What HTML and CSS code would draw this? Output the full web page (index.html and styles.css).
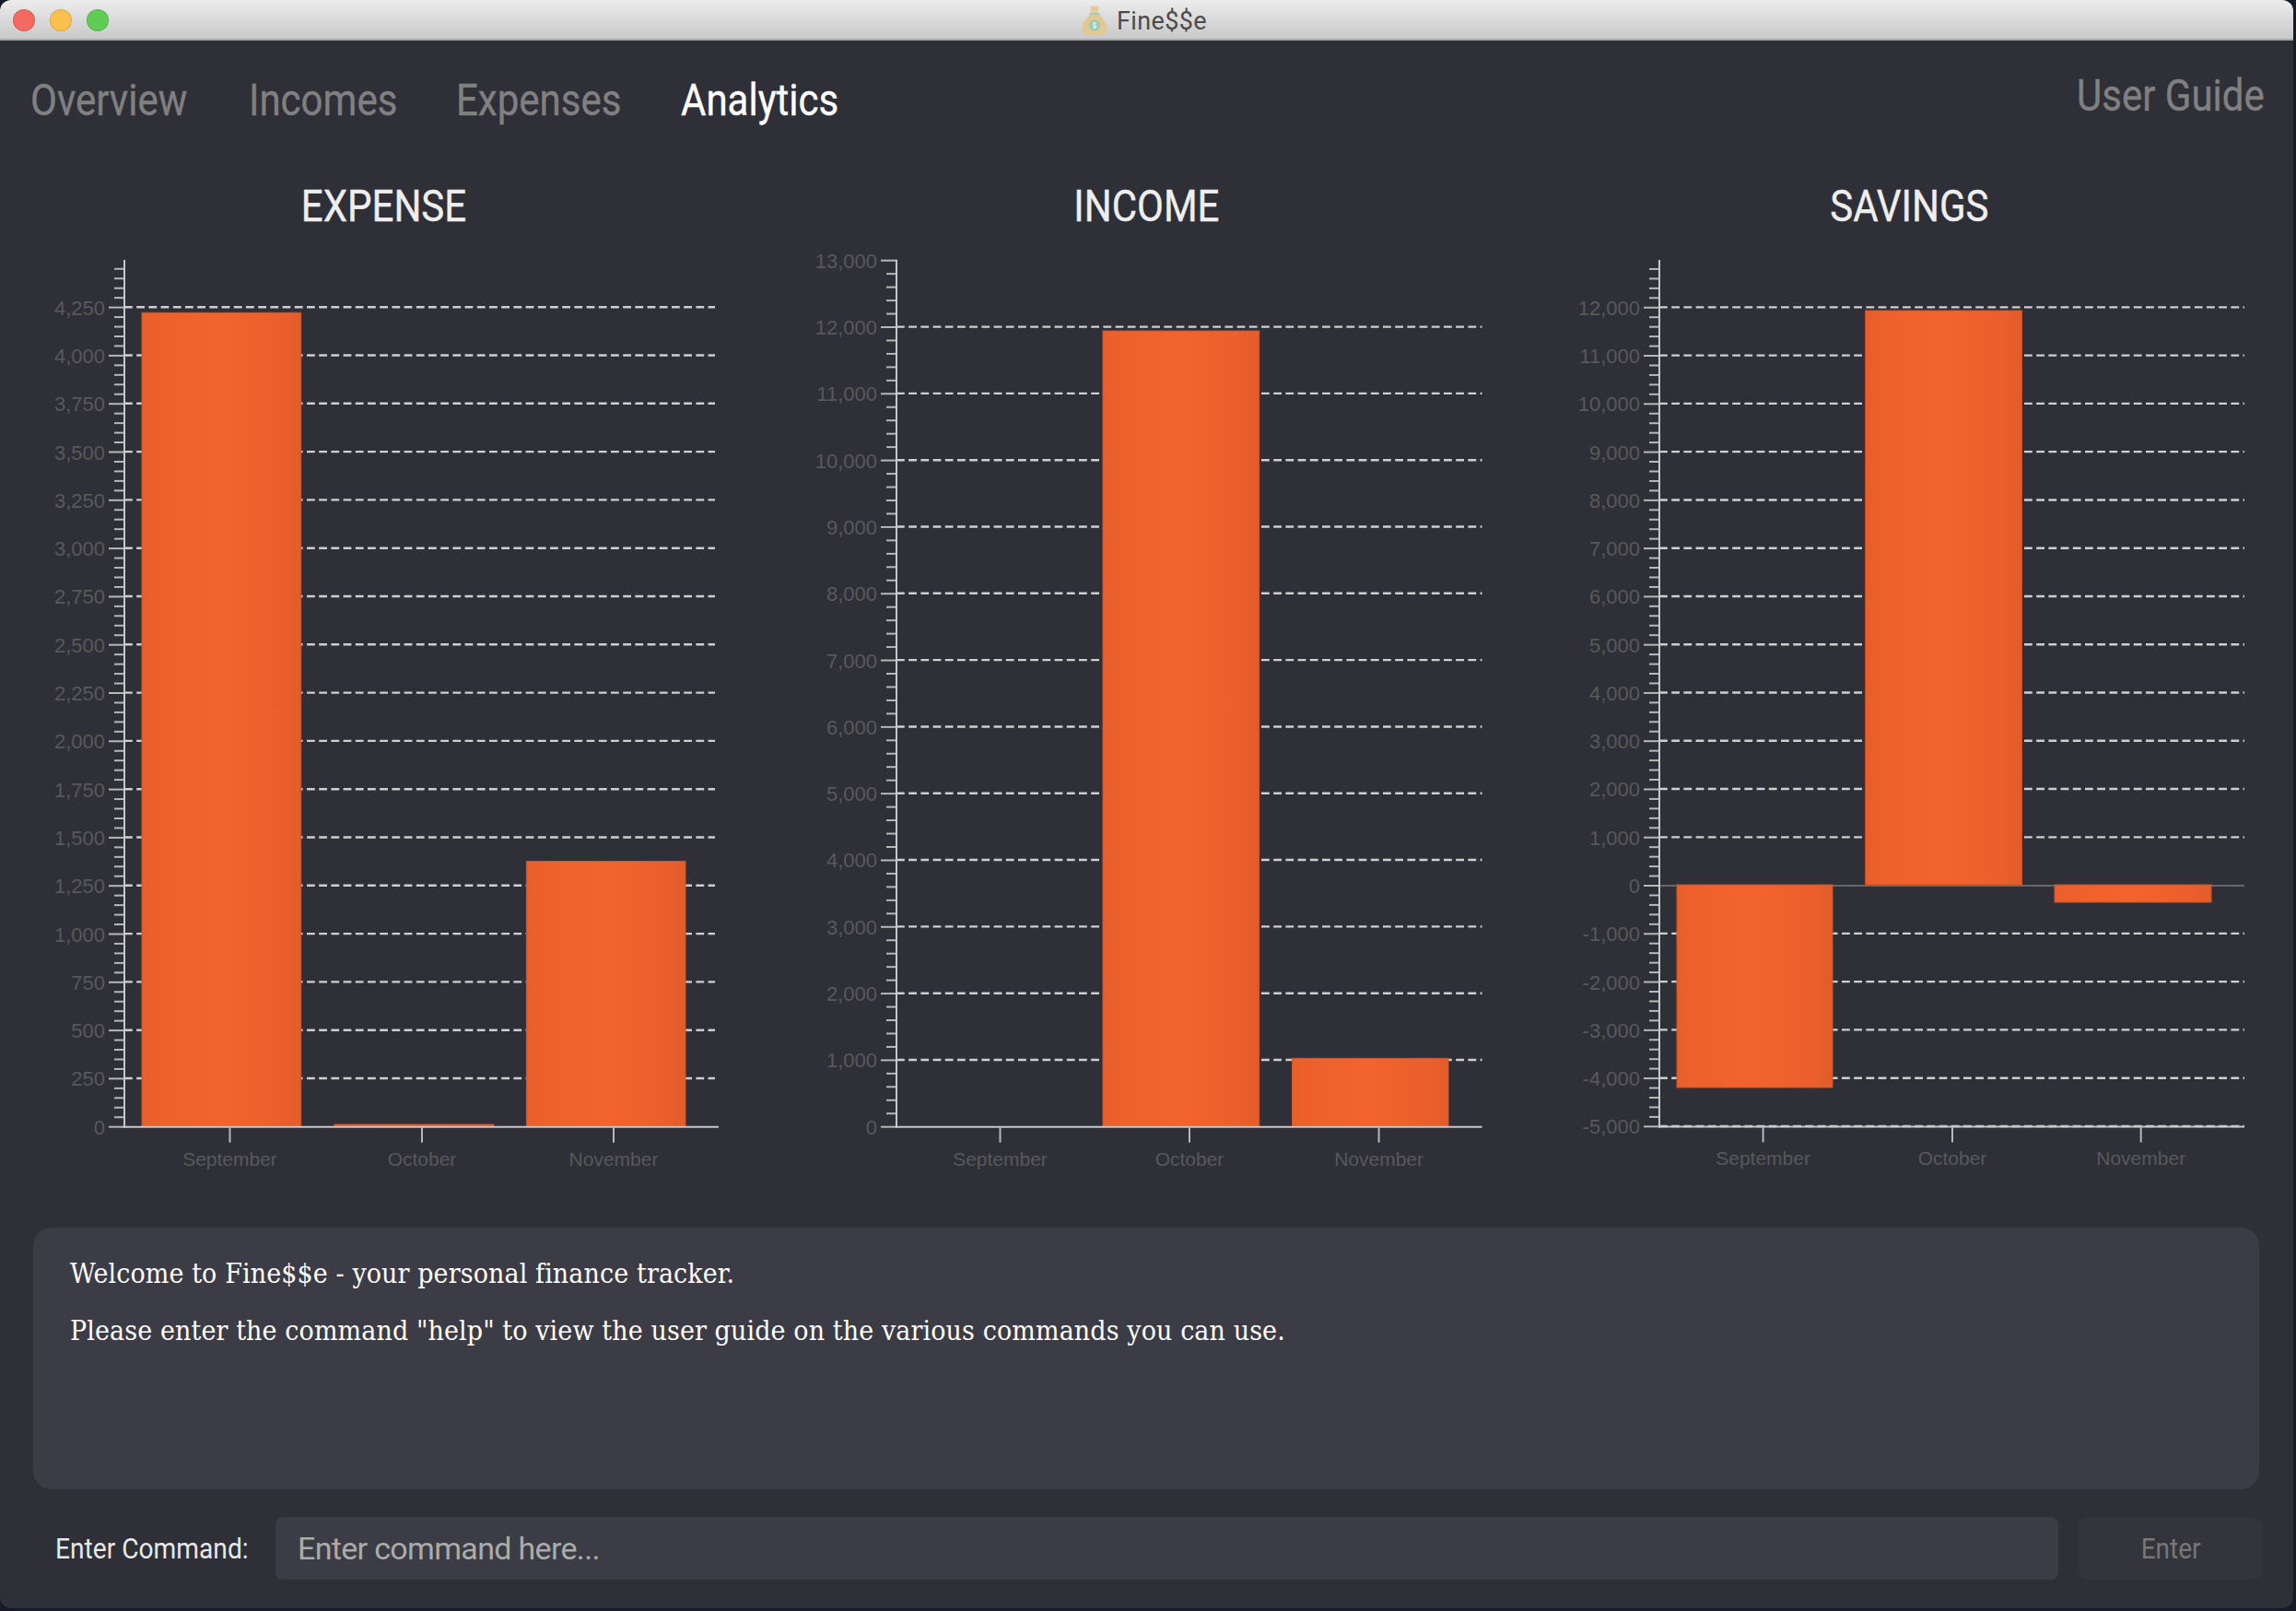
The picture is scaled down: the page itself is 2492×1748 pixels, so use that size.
FILE: index.html
```html
<!DOCTYPE html>
<html lang="en">
<head>
<meta charset="utf-8">
<title>Fine$$e</title>
<link rel="stylesheet" href="styles.css">
</head>
<body>
<svg class="defs" width="0" height="0" aria-hidden="true">
  <defs>
    <linearGradient id="barFill" x1="0" y1="0" x2="1" y2="0">
      <stop offset="0" stop-color="#e85f2c"/>
      <stop offset="0.15" stop-color="#ef612c"/>
      <stop offset="0.5" stop-color="#f3632d"/>
      <stop offset="0.85" stop-color="#ec5f2c"/>
      <stop offset="1" stop-color="#e25c2b"/>
    </linearGradient>
  </defs>
</svg>
<div class="window">
  <header class="titlebar">
    <div class="lights">
      <span class="light red"></span>
      <span class="light amber"></span>
      <span class="light green"></span>
    </div>
    <div class="wintitle">
      <svg class="bag" viewBox="0 0 28 32">
        <path d="M9 1.500c3-1.300 7-1.300 10 0l-1.500 6.500h-7z" fill="#e6cc98"/>
        <path d="M10 9h8c4 4 9.500 9 9.500 16 0 5-3 6.500-6 6.500h-15c-3 0-6-1.500-6-6.500 0-7 5.500-12 9.500-16z" fill="#e3c894"/>
        <rect x="8.500" y="8" width="11" height="2.200" rx="1" fill="#9fcdb6"/>
        <circle cx="14" cy="21.500" r="6" fill="#93cdb8"/>
        <path d="M16 19.300c-1-.8-3.800-.9-3.900.8 0 1.900 3.900 1 3.900 3 0 1.700-3 1.600-4.200.6M14 17.800v7.400" fill="none" stroke="#f2f2e6" stroke-width="1"/>
      </svg>
      <span class="wintext">Fine$$e</span>
    </div>
  </header>

  <nav class="tabs">
    <div class="tablist">
      <span class="tab tab-overview">Overview</span>
      <span class="tab tab-incomes">Incomes</span>
      <span class="tab tab-expenses">Expenses</span>
      <span class="tab tab-active">Analytics</span>
    </div>
    <span class="tab tab-guide">User Guide</span>
  </nav>

  <main class="charts">
    <section class="chart">
      <h2 class="chart-title"><span class="squeeze">EXPENSE</span></h2>
      <svg class="plot" id="plot-expense" viewBox="0 270 828 1028"></svg>
    </section>
    <section class="chart">
      <h2 class="chart-title"><span class="squeeze">INCOME</span></h2>
      <svg class="plot" id="plot-income" viewBox="0 270 828 1028"></svg>
    </section>
    <section class="chart">
      <h2 class="chart-title"><span class="squeeze">SAVINGS</span></h2>
      <svg class="plot" id="plot-savings" viewBox="0 270 828 1028"></svg>
    </section>
  </main>

  <section class="result">
    <p class="result-line">Welcome to Fine$$e - your personal finance tracker.</p>
    <p class="result-line">Please enter the command "help" to view the user guide on the various commands you can use.</p>
  </section>

  <footer class="command">
    <label class="command-label"><span class="squeeze">Enter Command:</span></label>
    <div class="command-input"><span>Enter command here...</span></div>
    <div class="command-button"><span class="squeeze">Enter</span></div>
  </footer>
</div>
<script src="chart.js"></script>
</body>
</html>
```

FILE: styles.css
```css
html, body {
  margin: 0;
  padding: 0;
  background: #151b29;
}
body {
  width: 2492px;
  height: 1748px;
  overflow: hidden;
  font-family: "Roboto", "Liberation Sans", sans-serif;
}
.defs { position: absolute; }

.window {
  width: 2489px;
  height: 1745px;
  background: #2e2f37;
  border-radius: 12px;
  overflow: hidden;
  display: flex;
  flex-direction: column;
}

.titlebar {
  height: 42px;
  flex: none;
  border-bottom: 2px solid #a9a9a9;
  background: linear-gradient(#ececec, #c9c9c9);
  display: flex;
  align-items: center;
  justify-content: center;
  position: relative;
}
.lights {
  position: absolute;
  left: 14px;
  top: 10px;
  display: flex;
  gap: 16px;
}
.light { width: 24px; height: 24px; border-radius: 50%; box-sizing: border-box; border: 1px solid rgba(0,0,0,.12); }
.red { background: #f46a60; }
.amber { background: #fcc04c; }
.green { background: #5fcc53; }
.wintitle {
  display: flex;
  align-items: center;
  gap: 10px;
  margin-right: 5px;
  padding-top: 2px;
}
.bag { width: 28px; height: 32px; }
.wintext {
  font-family: "Roboto", sans-serif;
  font-size: 27px;
  color: #4c4c4c;
  letter-spacing: 0.4px;
  line-height: 32px;
  padding-top: 2px;
}

.tabs {
  height: 128px;
  flex: none;
  display: flex;
  justify-content: space-between;
  padding: 0 30px 0 33px;
}
.tablist { display: flex; gap: 67px; padding-top: 36px; }
.tab {
  display: inline-block;
  font-size: 48px;
  line-height: 58px;
  color: #808080;
  -webkit-text-stroke: 0.4px currentColor;
  transform: scaleX(.875);
  transform-origin: left center;
  white-space: nowrap;
}
.tab-overview { width: 170px; }
.tab-incomes { width: 158px; }
.tab-expenses { width: 177px; }
.tab-active { color: #ffffff; width: 172px; }
.tab-guide { margin-top: 31px; margin-left: -2px; width: 205px; height: 58px; }

.charts {
  flex: none;
  height: 1160px;
  display: grid;
  grid-template-columns: repeat(3, 828px);
  margin-left: 2px;
}
.chart { display: flex; flex-direction: column; align-items: center; }
.chart-title {
  margin: 23px 0 17px;
  height: 58px;
  font-size: 48px;
  line-height: 58px;
  font-weight: 400;
  color: #eeeeee;
  -webkit-text-stroke: 0.4px currentColor;
}
.squeeze {
  display: inline-block;
  transform: scaleX(.875);
  white-space: nowrap;
}
.plot { display: block; width: 828px; height: 1028px; overflow: visible; flex: none; }

.axis { stroke: #c8c8c8; stroke-width: 2; fill: none; }
.tick { stroke: #b8b8b8; stroke-width: 2; fill: none; }
.grid { stroke: #cfcfcf; stroke-width: 2.400; stroke-dasharray: 8.800 4.400; fill: none; }
.zero { stroke: #666666; stroke-width: 2; fill: none; }
.bar { fill: url(#barFill); stroke: #cf5529; stroke-width: 1; }
.ylabel, .xlabel {
  font-family: "Liberation Sans", sans-serif;
  fill: #595959;
}
.ylabel { font-size: 22px; text-anchor: end; }
.xlabel { font-size: 21px; text-anchor: middle; }

.result {
  flex: none;
  box-sizing: border-box;
  width: 2416px;
  height: 284px;
  margin-left: 36px;
  padding: 29px 40px;
  background: #3b3c45;
  border-radius: 20px;
}
.result-line {
  margin: 0 0 20px;
  font-family: "DejaVu Serif Condensed", "DejaVu Serif", serif;
  font-size: 30px;
  line-height: 42px;
  letter-spacing: 0.1px;
  color: #ffffff;
}

.command {
  flex: none;
  margin-top: 30px;
  height: 68px;
  display: flex;
  align-items: center;
  padding-left: 60px;
}
.command-label {
  width: 239px;
  flex: none;
  font-size: 32px;
  color: #e8e8e8;
}
.command-label .squeeze { transform: scaleX(.88); transform-origin: left center; }
.command-input {
  width: 1935px;
  height: 68px;
  flex: none;
  box-sizing: border-box;
  background: #3b3c45;
  border-radius: 8px;
  padding-left: 24px;
  font-size: 34px;
  line-height: 68px;
  color: #ababab;
  letter-spacing: -0.670px;
}
.command-button {
  width: 200px;
  height: 68px;
  flex: none;
  margin-left: 22px;
  background: #33343c;
  border-radius: 12px;
  text-align: center;
  font-size: 32px;
  line-height: 68px;
  color: #777777;
}
```

FILE: chart.js
```js
var OFF = [2, 830, 1658];
var NS = "http://www.w3.org/2000/svg";

var charts = [
  { id: "plot-expense", off: OFF[0], axisX: 135, endX: 780, gridEnd: 776, zeroY: 1222.7, pxPerUnit: 52.3 / 250,
    min: 0, max: 4500, major: 250, minor: 50, bottom: 1222.7, topTick: false,
    cats: [["September", 249.5], ["October", 458], ["November", 666]],
    bars: [[154, 326.7, 339.3, 1222], [362.8, 535.7, 1220, 1222], [571.4, 744, 934.5, 1222]] },
  { id: "plot-income", off: OFF[1], axisX: 973, endX: 1608.5, gridEnd: 1608.5, zeroY: 1222.7, pxPerUnit: 72.31 / 1000,
    min: 0, max: 13000, major: 1000, minor: 200, bottom: 1222.7, topTick: true,
    cats: [["September", 1085.5], ["October", 1291], ["November", 1496.6]],
    bars: [[1197, 1366.7, 359, 1222], [1402.5, 1572, 1148.3, 1222]] },
  { id: "plot-savings", off: OFF[2], axisX: 1801, endX: 2436, gridEnd: 2436, zeroY: 961, pxPerUnit: 52.27 / 1000,
    min: -5000, max: 13000, major: 1000, minor: 200, bottom: 1222.4, zeroLine: true, topTick: false,
    cats: [["September", 1913.6], ["October", 2119], ["November", 2323.7]],
    bars: [[1820, 1989, 960, 1180], [2024.7, 2194.4, 337, 960], [2230, 2400, 960, 979]] }
];

function el(parent, name, attrs, text) {
  var n = document.createElementNS(NS, name);
  for (var k in attrs) n.setAttribute(k, attrs[k]);
  if (text) n.textContent = text;
  parent.appendChild(n);
  return n;
}

function fmt(v) {
  return v.toString().replace(/\B(?=(\d{3})+$)/g, ",");
}

charts.forEach(function (c) {
  var svg = document.getElementById(c.id);
  var o = c.off;
  var Y = function (v) { return c.zeroY - v * c.pxPerUnit; };
  var ax = c.axisX - o, end = c.endX - o, gend = c.gridEnd - o;
  var topY = c.topTick ? Y(c.max) - 1 : 282;

  for (var v = c.min; v <= c.max; v += c.minor) {
    var y = Y(v);
    if (v === c.max && !c.topTick) continue;
    if (v % c.major === 0) {
      if (v !== 0 && v !== c.max) el(svg, "line", { "class": "grid", x1: ax, x2: gend, y1: y - 0.4, y2: y - 0.4 });
      el(svg, "line", { "class": "tick", x1: ax - 17, x2: ax, y1: y, y2: y });
      el(svg, "text", { "class": "ylabel", x: ax - 21, y: y + 8 }, fmt(v));
    } else {
      el(svg, "line", { "class": "tick", x1: ax - 11, x2: ax, y1: y, y2: y });
    }
  }
  if (c.zeroLine) el(svg, "line", { "class": "zero", x1: ax, x2: end, y1: c.zeroY, y2: c.zeroY });

  c.bars.forEach(function (b) {
    el(svg, "rect", { "class": "bar", x: b[0] - o, y: b[2], width: b[1] - b[0], height: b[3] - b[2] });
  });

  el(svg, "line", { "class": "axis", x1: ax, x2: ax, y1: topY, y2: c.bottom + 1 });
  el(svg, "line", { "class": "axis", x1: ax - 1, x2: end, y1: c.bottom, y2: c.bottom });

  c.cats.forEach(function (cat) {
    var x = cat[1] - o;
    el(svg, "line", { "class": "tick", x1: x, x2: x, y1: c.bottom, y2: c.bottom + 17 });
    el(svg, "text", { "class": "xlabel", x: x, y: c.bottom + 42 }, cat[0]);
  });
});
```
